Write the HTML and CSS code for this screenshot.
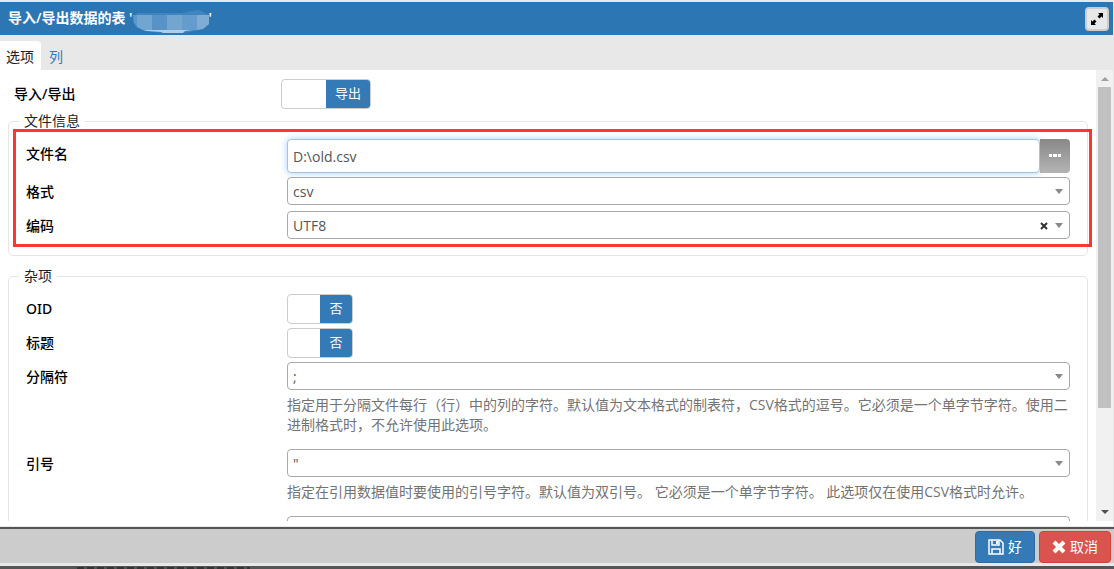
FILE: index.html
```html
<!DOCTYPE html>
<html lang="zh-CN">
<head>
<meta charset="utf-8">
<title>导入/导出数据</title>
<link rel="stylesheet" href="styles.css">
</head>
<body>
<main class="dialog">
  <header class="titlebar">
    <h1 class="title"><span>导入/导出数据的表 '</span><svg class="masked-name" width="76" height="24" viewBox="0 0 76 24" aria-hidden="true"><path d="M4 3L50 3L58 1L66 0L72 3L76 5L76 14L70 19L62 21L50 23L30 23L12 21L3 17L0 12L1 6Z" fill="#3f86c0"/><path d="M0 5H5V17L1 13Z" fill="#5a97cb"/><path d="M4 5H19V20H10L4 17Z" fill="#73a5d1"/><path d="M19 5H34V20H19Z" fill="#5793c7"/><path d="M34 5H49V20H34Z" fill="#73a5d1"/><path d="M49 5H64V20H49Z" fill="#649cce"/><path d="M64 5H76V14L70 19L64 20Z" fill="#7facd4"/><path d="M10 20H60L52 21L50 23H30L28 22L14 21Z" fill="#b0cfe6"/></svg><span>'</span></h1>
    <button class="maximize" type="button" aria-label="最大化"><svg width="14" height="14" viewBox="0 0 14 14"><path d="M8 1H13V6L11.500 4.500L9.500 6.500L7.500 4.500L9.500 2.500ZM1 8L2.500 9.500L4.500 7.500L6.500 9.500L4.500 11.500L6 13H1Z"/></svg></button>
  </header>
  <nav class="tabs">
    <a class="tab tab-active" href="#options">选项</a>
    <a class="tab" href="#columns">列</a>
  </nav>
  <div class="body">
    <form class="pane" id="options">
      <div class="row row-top">
        <label class="label" for="direction">导入/导出</label>
        <div><button class="switch switch-wide" id="direction" type="button"><span class="switch-knob"></span><span class="switch-text">导出</span></button></div>
      </div>
      <fieldset class="group">
        <legend class="legend">文件信息</legend>
        <div class="rows">
          <div class="row">
            <label class="label" for="file">文件名</label>
            <div class="file"><input class="file-input" id="file" type="text" value="D:\old.csv"><button class="browse" type="button" aria-label="浏览"><svg width="12" height="4" viewBox="0 0 12 4"><path d="M0 0H3V3H0ZM4 0H8V3H4ZM9 0H12V3H9Z" fill="#fff"/></svg></button></div>
          </div>
          <div class="row">
            <label class="label" for="format">格式</label>
            <div class="field"><div class="picker"><select class="select" id="format"><option>csv</option></select></div></div>
          </div>
          <div class="row">
            <label class="label" for="encoding">编码</label>
            <div class="field"><div class="picker"><select class="select" id="encoding"><option>UTF8</option></select><button class="clear" type="button" aria-label="清除"><svg width="8" height="8" viewBox="0 0 8 8"><path d="M1 1L7 7M7 1L1 7" stroke="#333" stroke-width="2"/></svg></button></div></div>
          </div>
          <div class="highlight"></div>
        </div>
      </fieldset>
      <fieldset class="group group-next">
        <legend class="legend">杂项</legend>
        <div class="rows">
          <div class="row">
            <label class="label" for="oid">OID</label>
            <div><button class="switch" id="oid" type="button"><span class="switch-knob"></span><span class="switch-text">否</span></button></div>
          </div>
          <div class="row">
            <label class="label" for="heading">标题</label>
            <div><button class="switch" id="heading" type="button"><span class="switch-knob"></span><span class="switch-text">否</span></button></div>
          </div>
          <div class="row">
            <label class="label" for="delimiter">分隔符</label>
            <div><div class="picker"><select class="select" id="delimiter"><option>;</option></select></div>
            <p class="help">指定用于分隔文件每行（行）中的列的字符。默认值为文本格式的制表符，CSV格式的逗号。它必须是一个单字节字符。使用二进制格式时，不允许使用此选项。</p></div>
          </div>
          <div class="row">
            <label class="label" for="quote">引号</label>
            <div><div class="picker"><select class="select" id="quote"><option>"</option></select></div>
            <p class="help">指定在引用数据值时要使用的引号字符。默认值为双引号。 它必须是一个单字节字符。 此选项仅在使用CSV格式时允许。</p></div>
          </div>
          <div class="row">
            <span class="label"></span>
            <div class="picker"><select class="select" aria-label="Escape"><option>'</option></select></div>
          </div>
        </div>
      </fieldset>
    </form>
    <div class="scrollbar" aria-hidden="true"><span class="arrow-up"></span><span class="track"><span class="thumb"></span></span><span class="arrow-down"></span></div>
  </div>
  <footer class="footer">
    <button class="btn btn-ok" type="button"><svg width="16" height="16" viewBox="0 0 16 16" fill="none" stroke="#fff" stroke-width="1.500"><path d="M1 1H12L15 4V15H1ZM4 1V6H11V1M4 15V10H12V15"/><path d="M8 2H10V5H8Z" fill="#fff" stroke="none"/></svg>好</button>
    <button class="btn btn-cancel" type="button"><svg width="14" height="14" viewBox="0 0 14 14"><path d="M2 2L12 12M12 2L2 12" stroke="#fff" stroke-width="4"/></svg>取消</button>
  </footer>
  <div class="backdrop" aria-hidden="true"></div>
</main>
</body>
</html>
```
FILE: styles.css
```css
* { box-sizing: border-box; }
body {
  margin: 0;
  background: #555;
  color: #000;
  font: 14px/20px "Open Sans", "Noto Sans CJK SC", sans-serif;
}
button, input, select { font: inherit; margin: 0; }
.dialog {
  display: flex;
  flex-direction: column;
  height: 100vh;
  padding-top: 2px;
  background: #e8e8e8;
  overflow: hidden;
}
.titlebar {
  display: flex;
  align-items: center;
  justify-content: space-between;
  flex: none;
  height: 33px;
  margin-right: 1px;
  padding: 0 4px 0 8px;
  background: #2c76b4;
  color: #fff;
}
.title { display: flex; align-items: center; margin: 0; padding-bottom: 2px; font-size: 14px; font-weight: 600; }
.masked-name { margin-top: 8px; }
.maximize {
  display: grid;
  place-items: center;
  width: 24px;
  height: 24px;
  padding: 0;
  border: 2px solid #ccc;
  border-radius: 4px;
  background: #e8e8e8;
}
.tabs { display: flex; flex: none; height: 35px; padding-top: 6px; }
.tab { padding: 6px 7px 0 8px; color: #337ab7; text-decoration: none; border-radius: 0 4px 0 0; }
.tab-active { padding-left: 6px; background: #fff; color: #222; }
.body { display: flex; flex: 1; min-height: 0; margin-right: 1px; background: #fff; border-bottom: 5px solid #fff; }
.pane { flex: 1; min-width: 0; padding: 9px 8px 0; overflow: hidden; }
.row { display: grid; grid-template-columns: 1fr 3fr; margin-bottom: 4px; }
.row-top { margin-bottom: 0; padding: 0 6px; }
.label { line-height: 30px; font-family: "Noto Sans", "Noto Sans CJK SC", sans-serif; font-weight: 500; }
.group { min-width: 0; margin: 2px 0 0; padding: 8px 10px 10px; border: 1px solid #e5e5e5; border-radius: 5px; }
.group-next { margin-top: 10px; }
.legend { padding: 0 5px; color: #222; }
.rows { position: relative; display: flow-root; padding: 0 7px; }
.highlight {
  position: absolute;
  inset: -10px -15px -2px -6px;
  border: 3px solid #ff3535;
  pointer-events: none;
}
.switch {
  display: flex;
  width: 66px;
  height: 30px;
  padding: 0;
  border: 1px solid #ccc;
  border-radius: 4px;
  background: #fff;
  overflow: hidden;
}
.switch-wide { width: 90px; }
.switch-knob { flex: 1; }
.switch-text { flex: 1; padding-bottom: 2px; line-height: 26px; background: #337ab7; color: #fff; font-size: 13px; }
.field { padding-bottom: 2px; }
.picker { position: relative; }
.picker::after {
  content: "";
  position: absolute;
  top: 12px;
  right: 7px;
  border: 4px solid transparent;
  border-top: 5px solid #888;
  border-bottom: 0;
  pointer-events: none;
}
.select {
  display: block;
  appearance: none;
  width: 100%;
  height: 28px;
  padding: 2px 5px 0;
  border: 1px solid #aaa;
  border-radius: 4px;
  background: #fff;
  color: #555;
}
.clear { position: absolute; top: 6px; right: 20px; display: grid; place-items: center; width: 12px; height: 18px; padding: 0; border: 0; background: none; }
.file { display: flex; height: 34px; }
.file-input {
  flex: 1;
  min-width: 0;
  padding: 2px 5px 0;
  border: 1px solid #a5c3de;
  border-radius: 4px;
  box-shadow: 0 0 7px rgba(102, 175, 233, 0.6);
  color: #555;
  outline: 0;
}
.browse {
  display: grid;
  place-items: center;
  width: 30px;
  padding: 0;
  border: 0;
  border-radius: 0 4px 4px 0;
  background: linear-gradient(#888, #b4b4b4);
}
.help { margin: 5px 0 10px; color: #737373; }
.scrollbar { display: flex; flex-direction: column; align-items: center; width: 17px; background: #f1f1f1; }
.arrow-up, .arrow-down { border: 4px solid transparent; }
.arrow-up { margin: 7px 0 6px; border-top: 0; border-bottom-color: #a0a0a0; }
.arrow-down { margin: 6px 0 7px; border-bottom: 0; border-top-color: #505050; }
.track { flex: 1; width: 13px; }
.thumb { display: block; height: 77%; background: #c1c1c1; }
.footer {
  display: flex;
  align-items: flex-end;
  justify-content: flex-end;
  gap: 4px;
  flex: none;
  height: 39px;
  margin-top: 1px;
  padding: 0 3px 0 0;
  border-top: 2px solid #555;
  border-bottom: 3px solid #e8e8e8;
  background: #ccc;
}
.btn { display: flex; align-items: center; justify-content: center; gap: 4px; height: 32px; padding: 0 12px; border: 1px solid; border-radius: 4px; color: #fff; }
.btn-ok { background: #337ab7; border-color: #2e6da4; }
.btn-cancel { background: #d9534f; border-color: #d43f3a; }
.backdrop {
  flex: none;
  height: 3px;
  background: repeating-linear-gradient(90deg, #333 0 7px, #555 7px 10px) 77px 1px / 173px 2px no-repeat #555;
}
```
